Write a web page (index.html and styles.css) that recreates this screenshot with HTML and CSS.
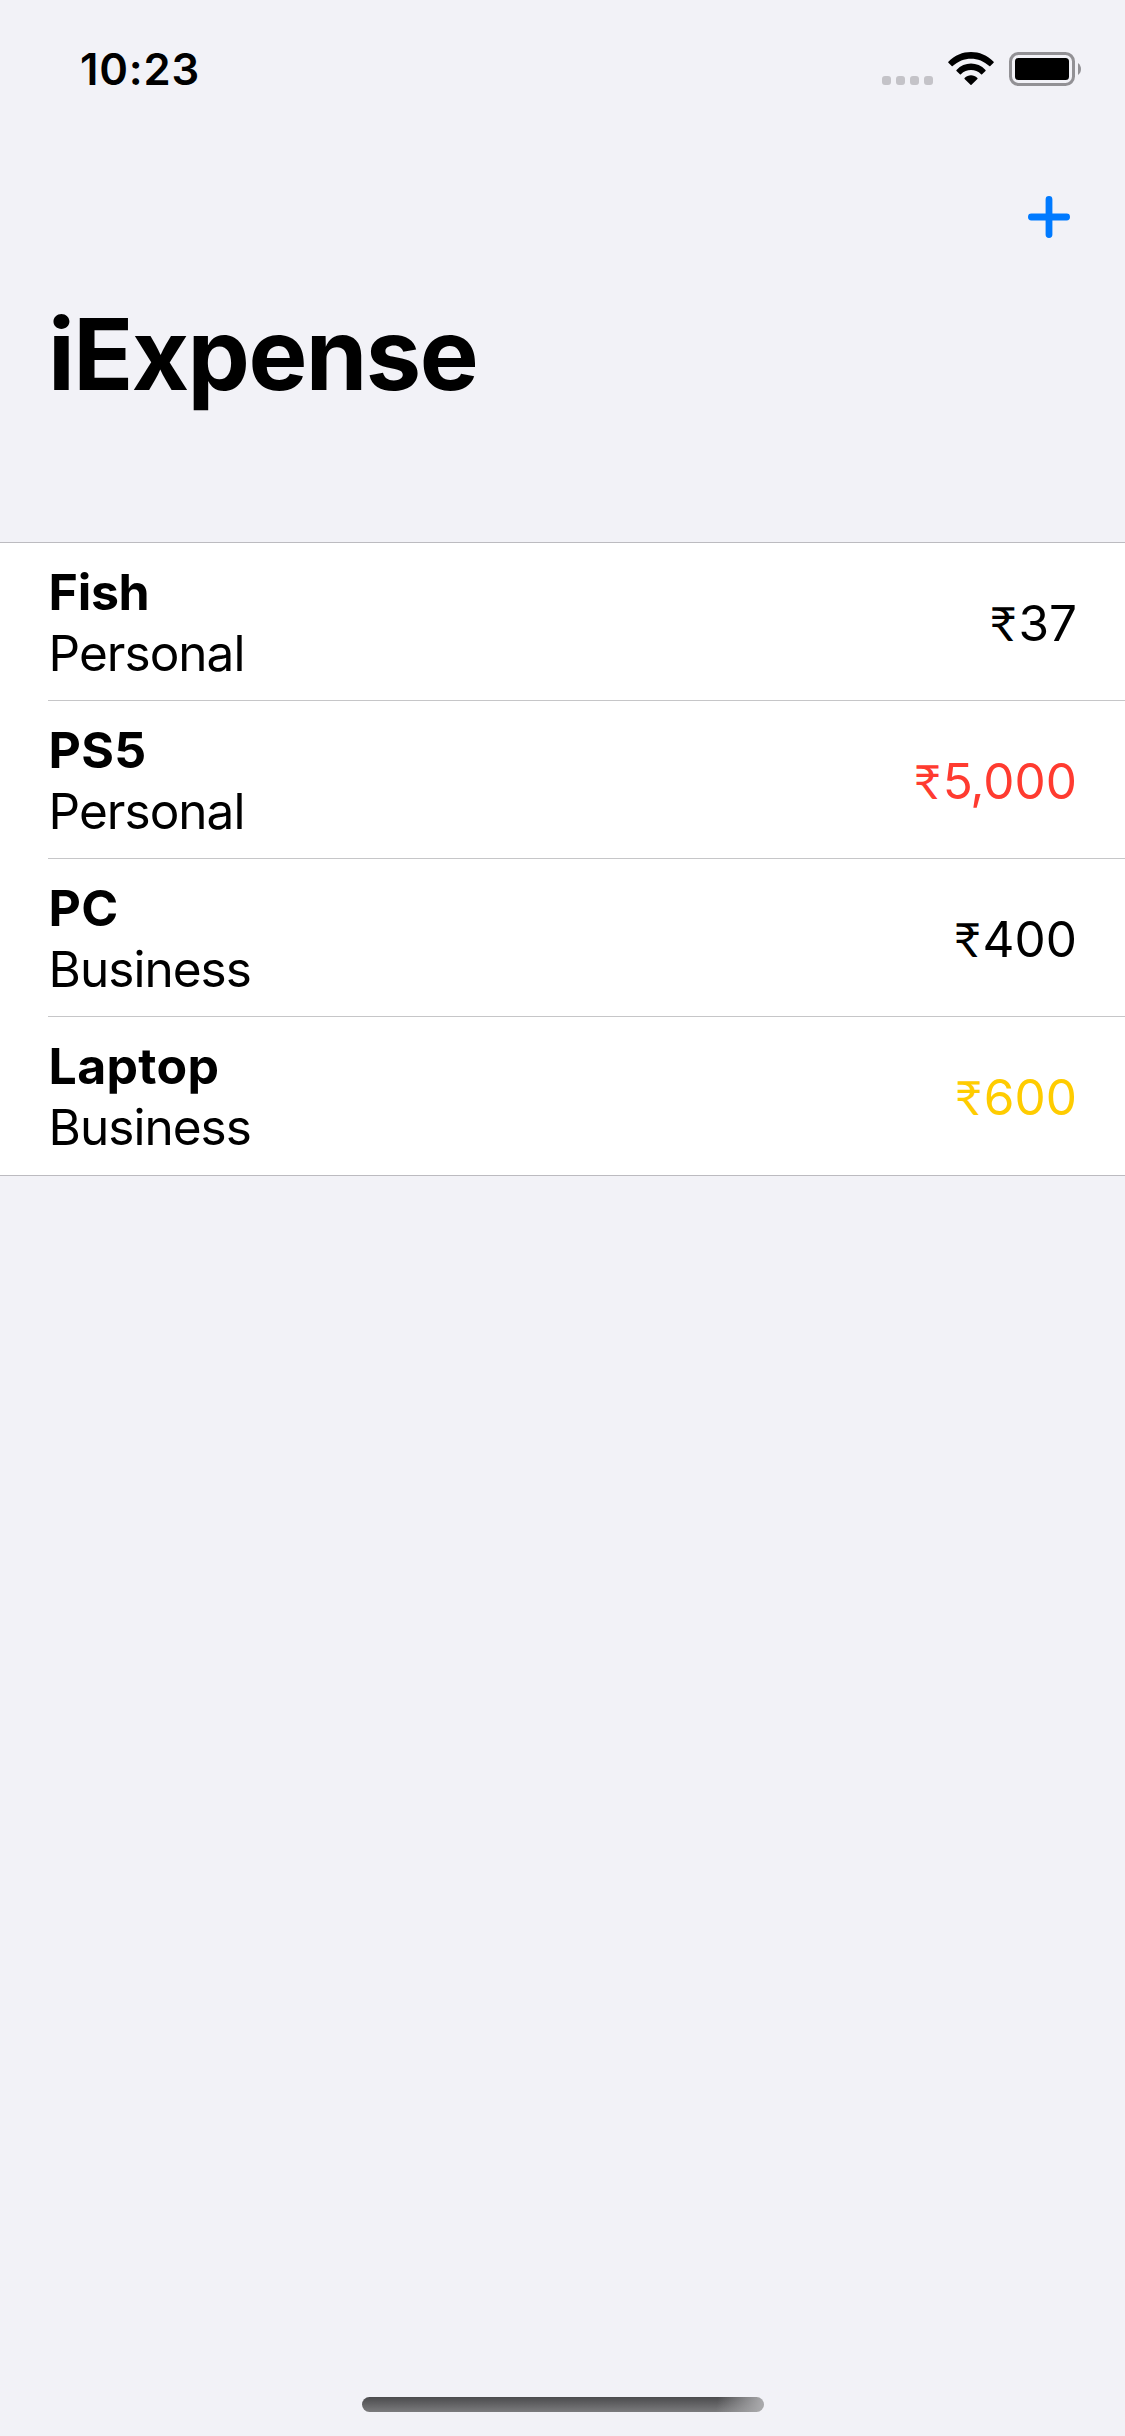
FILE: index.html
```html
<!DOCTYPE html>
<html lang="en">
<head>
<meta charset="utf-8">
<title>iExpense</title>
<link rel="stylesheet" href="styles.css">
</head>
<body>
<div class="screen">
  <div class="status-bar">
    <span class="time">10:23</span>
    <div class="status-icons">
      <svg class="signal" width="51" height="9" viewBox="0 0 51 9" fill="#c4c3c8"><rect width="9" height="9" rx="3"/><rect x="14" width="9" height="9" rx="3"/><rect x="28" width="9" height="9" rx="3"/><rect x="42" width="9" height="9" rx="3"/></svg>
      <svg class="wifi" width="46" height="33" viewBox="0 0 46 33"><path d="M0.4 9.8C12.8-3.2 33.2-3.2 45.6 9.8C45.9 10.1 45.9 10.5 45.6 10.8L42.3 14.1C42 14.4 41.6 14.4 41.3 14.1C31 4.2 15 4.2 4.7 14.1C4.4 14.4 4 14.4 3.7 14.1L0.4 10.8C0.1 10.5 0.1 10.1 0.4 9.8Z"/><path d="M8.5 17.9C16.6 9.5 29.4 9.5 37.5 17.9C37.8 18.2 37.8 18.6 37.5 18.9L34.1 22.2C33.8 22.5 33.4 22.5 33.1 22.2C27.4 16.7 18.6 16.7 12.9 22.2C12.6 22.5 12.2 22.5 11.9 22.2L8.5 18.9C8.2 18.6 8.2 18.2 8.5 17.9Z"/><path d="M16.6 26C20.3 22.3 25.7 22.3 29.4 26C29.7 26.3 29.7 26.7 29.4 27L23.5 32.7C23.2 33 22.8 33 22.5 32.7L16.6 27C16.3 26.7 16.3 26.3 16.6 26Z"/></svg>
      <svg class="battery" width="73" height="34" viewBox="0 0 73 34"><rect x="1.5" y="1.5" width="63" height="31" rx="8" fill="none" stroke="#929195" stroke-width="3"/><rect x="6" y="6" width="54" height="22" rx="3.5"/><path d="M69 11A7.5 7.5 0 0 1 69 23Z" fill="#929195"/></svg>
    </div>
  </div>
  <div class="nav-bar">
    <button class="add" aria-label="Add expense">
      <svg width="42" height="42" viewBox="0 0 42 42" fill="none" stroke="#007aff" stroke-width="6.8" stroke-linecap="round"><path d="M3.4 21H38.6M21 3.4V38.6"/></svg>
    </button>
  </div>
  <h1 class="title">iExpense</h1>
  <ul class="expenses">
    <li class="expense"><div><div class="name tight">Fish</div><div class="type">Personal</div></div><div class="amount"><span class="rupee">₹</span>37</div></li>
    <li class="expense"><div><div class="name">PS5</div><div class="type">Personal</div></div><div class="amount high"><span class="rupee">₹</span><span class="thousands">5,</span>000</div></li>
    <li class="expense"><div><div class="name">PC</div><div class="type">Business</div></div><div class="amount"><span class="rupee">₹</span>400</div></li>
    <li class="expense"><div><div class="name">Laptop</div><div class="type">Business</div></div><div class="amount medium"><span class="rupee">₹</span>600</div></li>
  </ul>
  <div class="home-indicator"></div>
</div>
</body>
</html>
```
FILE: styles.css
```css
* { box-sizing: border-box; margin: 0; padding: 0; }
body { background: #f2f2f7; color: #000; font-family: Inter, "Liberation Sans", sans-serif; }
.screen { display: flex; flex-direction: column; width: 1125px; height: 2436px; }
.status-bar { display: flex; justify-content: space-between; height: 132px; padding: 42px 43px 0 80px; }
.time { padding-top: 1px; font-size: 43.6px; font-weight: 600; line-height: 54px; letter-spacing: 0.8px; }
.status-icons { display: flex; align-items: flex-end; height: 44px; }
.signal { margin: 0 15px 1px 0; }
.wifi { margin: 0 15px 1px 0; }
.nav-bar { display: flex; justify-content: flex-end; align-items: center; height: 170px; padding-right: 55px; }
.add { display: flex; border: 0; background: none; }
.title { height: 240px; padding-left: 48px; font-size: 99px; font-weight: 700; line-height: 104px; letter-spacing: -1.6px; }
.expenses { list-style: none; background: #fff; border-top: 1px solid #bcbbc0; border-bottom: 1px solid #bcbbc0; }
.expense { display: flex; justify-content: space-between; align-items: center; height: 158px; margin-left: 48px; padding: 3px 48px 0 0.6px; border-bottom: 1px solid #c6c6c8; font-size: 49.5px; line-height: 61px; }
.expense:last-child { border-bottom-color: #fff; }
.name { font-size: 50px; font-weight: 700; letter-spacing: 0.3px; }
.name.tight { letter-spacing: -0.3px; }
.type { letter-spacing: -0.98px; }
.amount { padding-top: 1px; }
.rupee { margin-right: 1.7px; font-family: Lato, sans-serif; font-size: 47px; line-height: 0; }
.thousands { letter-spacing: -1.2px; }
.high { color: #ff3b30; }
.medium { color: #ffcc00; }
.home-indicator { width: 402px; height: 15px; margin: auto 0 24px 362px; border-radius: 8px; background: linear-gradient(100deg, transparent 88%, #a8a8aa 99%), linear-gradient(#4b4b4d, #7b7b7d); }
```
